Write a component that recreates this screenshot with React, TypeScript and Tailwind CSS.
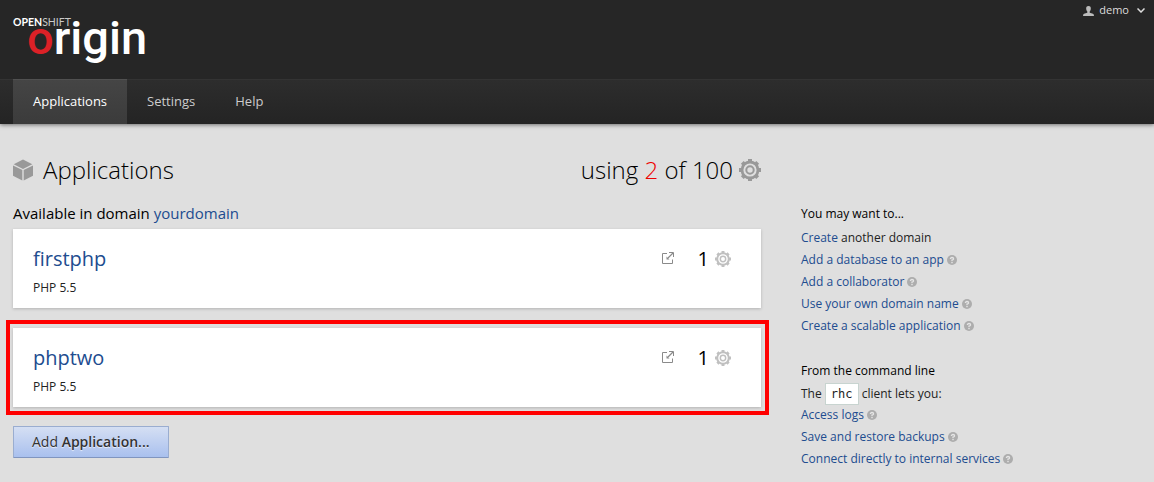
import React from "react";

const linkClass = "text-[#214c8f] hover:underline";

function Logo() {
  return (
    <svg width="140" height="60" viewBox="0 0 140 60" role="img" aria-label="OpenShift Origin" className="block overflow-visible">
      <text x="0" y="10" fill="#ffffff" fontFamily="Lato, sans-serif" fontSize="10.500">
        <tspan fontWeight="700">OPEN</tspan>
        <tspan fontWeight="400" fill="#c8c8c8">SHIFT</tspan>
      </text>
      <text x="14" y="38" fill="#ffffff" fontFamily="Roboto, sans-serif" fontSize="47" fontWeight="500">
        <tspan fill="#db2127">o</tspan>rigin
      </text>
    </svg>
  );
}

function CubeIcon() {
  return (
    <svg width="20" height="22" viewBox="0 0 20 22" aria-hidden="true">
      <g fill="#999999">
        <path d="M10 0.500L19.300 5.200L10 9.900L.7 5.200Z" />
        <path d="M0 6.500L9.300 11.100V21.500L0 16.700Z" />
        <path d="M20 6.500L10.700 11.100V21.500L20 16.700Z" />
      </g>
    </svg>
  );
}

function GearIcon({ size, color }: { size: number; color: string }) {
  return (
    <svg width={size} height={size} viewBox="0 0 22 22" fill="none" stroke={color} aria-hidden="true">
      <circle cx="11" cy="11" r="8" strokeWidth="2.800" />
      <circle cx="11" cy="11" r="3.700" strokeWidth="2" />
      <g strokeWidth="4">
        <path d="M11 0V3M11 19V22M0 11H3M19 11H22" />
        <path d="M3.300 3.300L5.300 5.300M16.700 16.700L18.700 18.700M3.300 18.700L5.300 16.700M16.700 5.300L18.700 3.300" />
      </g>
    </svg>
  );
}

function ExternalIcon() {
  return (
    <svg width="12" height="12" viewBox="0 0 12 12" fill="none" stroke="#8a8a8a" aria-hidden="true">
      <path d="M5 1.500H.5V11.500H10.500V7.500" />
      <path d="M7 .5H11.500V5" />
      <path d="M11 1L6 6" strokeWidth="1.200" />
      <path d="M4.500 4.500V7.500H7.500Z" fill="#8a8a8a" stroke="none" />
    </svg>
  );
}

function HelpIcon() {
  return (
    <svg width="10" height="10" viewBox="0 0 10 10" className="ml-[3px] inline-block align-[-1px]" aria-hidden="true">
      <circle cx="5" cy="5" r="5" fill="#adadad" />
      <path d="M3.400 4Q3.400 2.500 5 2.500T6.600 3.900Q6.600 4.700 5 5.100V6" fill="none" stroke="#e5e5e5" strokeWidth="1.300" />
      <rect x="4.300" y="6.800" width="1.400" height="1.400" fill="#e5e5e5" />
    </svg>
  );
}

function HelpLink({ children }: { children: string }) {
  return (
    <li>
      <a href="#help" className={linkClass}>
        {children}
        <HelpIcon />
      </a>
    </li>
  );
}

function AppCard({ name, highlighted = false }: { name: string; highlighted?: boolean }) {
  return (
    <li className="relative flex justify-between bg-white px-5 pt-[17px] pb-[10px] shadow-[0_1px_3px_rgba(0,0,0,0.2)]">
      <div>
        <h2 className="text-xl leading-[26px]">
          <a href="#app" className={linkClass}>{name}</a>
        </h2>
        <p className="mt-[6px] text-xs leading-5 text-[#222]">PHP 5.5</p>
      </div>
      <div className="mr-[10px] flex h-[26px] items-center text-xl text-black">
        <a href="#open" aria-label={"Open " + name} className="mr-6 pb-0.5">
          <ExternalIcon />
        </a>
        <span className="mr-1.5">1</span>
        <GearIcon size={16} color="#c0c0c0" />
      </div>
      {highlighted && (
        <div className="pointer-events-none absolute -top-2 -right-2 -bottom-2 -left-[7px] border-4 border-[#ff0000]" />
      )}
    </li>
  );
}

export default function App() {
  return (
    <div className="min-h-screen bg-[#dfdfdf] font-['Open_Sans',sans-serif] text-[#222]">
      <header className="bg-[#262626] shadow-[0_1px_4px_rgba(0,0,0,0.5)]">
        <div className="flex h-[79px] items-start justify-between pt-4 pr-[9px] pl-[13px]">
          <a href="#home">
            <Logo />
          </a>
          <button type="button" className="-mt-4 flex h-[21px] items-center text-[11px] text-[#dddddd]">
            <svg width="11" height="10" viewBox="0 0 11 10" fill="#bbbbbb" className="mr-[5px]" aria-hidden="true">
              <path d="M5.500 0C7.300 0 8 1.200 7.800 3C7.700 4.300 7.200 4.900 6.700 5.500V6.700L10 7.800Q11 8.200 11 10H0Q0 8.200 1 7.800L4.300 6.700V5.500C3.800 4.900 3.300 4.300 3.200 3C3 1.200 3.700 0 5.500 0Z" />
            </svg>
            demo
            <svg width="8" height="5" viewBox="0 0 8 5" fill="none" stroke="#dddddd" strokeWidth="1.500" className="ml-2" aria-hidden="true">
              <path d="M.5 .5L4 4L7.500 .5" />
            </svg>
          </button>
        </div>
        <nav className="flex h-[45px] border-t border-[#333] bg-linear-to-b from-[#2d2d2d] to-[#242424] px-[13px] text-[13px] font-medium text-[#cccccc]">
          <a href="#applications" className="-mt-px flex items-center border-t border-[#505050] bg-linear-to-b from-[#454545] to-[#3b3b3b] px-5 text-white">Applications</a>
          <a href="#settings" className="flex items-center px-5">Settings</a>
          <a href="#help" className="flex items-center px-5">Help</a>
        </nav>
      </header>

      <div className="flex gap-10 px-[13px] pt-[30px] pb-4">
        <main className="min-w-0 flex-1">
          <div className="flex items-center justify-between text-2xl leading-8 text-black">
            <h1 className="flex items-center gap-[10px] font-light">
              <CubeIcon />
              Applications
            </h1>
            <p className="flex items-center gap-[6px] font-light">
              <span>using <span className="text-[#ee0000]">2</span> of 100</span>
              <GearIcon size={22} color="#999999" />
            </p>
          </div>
          <p className="mt-4 text-[15px] font-medium leading-[22px] text-black">
            Available in domain <a href="#domain" className={linkClass}>yourdomain</a>
          </p>
          <ul className="mt-[5px] flex flex-col gap-5">
            <AppCard name="firstphp" />
            <AppCard name="phptwo" highlighted />
          </ul>
          <button type="button" className="mt-[19px] h-8 rounded-[1px] border border-[#9aadd0] border-b-[#8095bf] bg-linear-to-b from-[#d5dff3] to-[#a9c0ee] px-[18px] text-sm text-[#333] [text-shadow:0_1px_1px_rgba(255,255,255,0.75)]">
            Add <strong className="font-semibold">Application...</strong>
          </button>
        </main>

        <aside className="w-[340px] shrink-0 pt-[49px] text-xs leading-[22px]">
          <h2 className="text-black">You may want to...</h2>
          <ul className="mt-0.5">
            <li><a href="#create" className={linkClass}>Create</a> another domain</li>
            <HelpLink>Add a database to an app</HelpLink>
            <HelpLink>Add a collaborator</HelpLink>
            <HelpLink>Use your own domain name</HelpLink>
            <HelpLink>Create a scalable application</HelpLink>
          </ul>
          <h2 className="mt-[23px] text-black">From the command line</h2>
          <p className="mt-0.5 leading-5">
            The <code className="border border-[#c8d4d0] bg-white px-[5px] py-[3px] font-['DejaVu_Sans_Mono',monospace] text-xs">rhc</code> client lets you:
          </p>
          <ul>
            <HelpLink>Access logs</HelpLink>
            <HelpLink>Save and restore backups</HelpLink>
            <HelpLink>Connect directly to internal services</HelpLink>
          </ul>
        </aside>
      </div>
    </div>
  );
}
